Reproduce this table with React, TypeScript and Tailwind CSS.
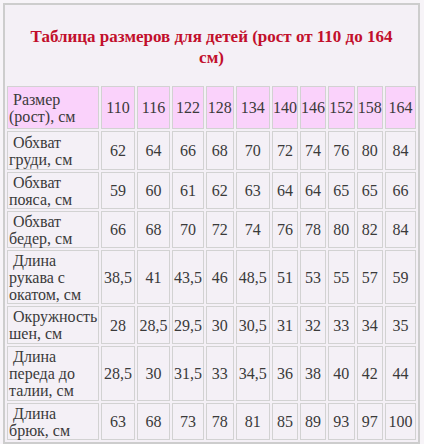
const widths = [90, 34, 34, 32, 28, 35, 26, 25, 27, 26, 32];

const sizes = ["110", "116", "122", "128", "134", "140", "146", "152", "158", "164"];

const rows: { label: string[]; h: string; values: string[] }[] = [
  { label: ["\u00a0Обхват", "груди, см"], h: "h-[39px]", values: ["62", "64", "66", "68", "70", "72", "74", "76", "80", "84"] },
  { label: ["\u00a0Обхват", "пояса, см"], h: "h-[37px]", values: ["59", "60", "61", "62", "63", "64", "64", "65", "65", "66"] },
  { label: ["\u00a0Обхват", "бедер, см"], h: "h-[37px]", values: ["66", "68", "70", "72", "74", "76", "78", "80", "82", "84"] },
  { label: ["\u00a0Длина", "рукава с", "окатом, см"], h: "h-[54px]", values: ["38,5", "41", "43,5", "46", "48,5", "51", "53", "55", "57", "59"] },
  { label: ["\u00a0Окружность", "шен, см"], h: "h-[38px]", values: ["28", "28,5", "29,5", "30", "30,5", "31", "32", "33", "34", "35"] },
  { label: ["\u00a0Длина", "переда до", "талии, см"], h: "h-[55px]", values: ["28,5", "30", "31,5", "33", "34,5", "36", "38", "40", "42", "44"] },
  { label: ["\u00a0Длина", "брюк, см"], h: "h-[37px]", values: ["63", "68", "73", "78", "81", "85", "89", "93", "97", "100"] },
];

export default function App() {
  return (
    <div className="w-[424px] h-[444px] bg-[#f7f4f8] pt-[3px] pl-[3px] overflow-hidden font-['Liberation_Serif',serif]">
      <div className="w-[417px] border-2 border-[#cdcdcd] bg-[#f4f0f6]">
        {/* title */}
        <div className="pt-[21px] pb-[16px] text-center text-[17px] leading-[21px] font-bold text-[#c20f2c]">
          Таблица размеров для детей (рост от 110 до 164
          <br />
          см)
        </div>

        <table className="table-fixed border-separate border-spacing-[2px] text-[16px] leading-[17px] text-[#3a3a3a] font-['Liberation_Serif',serif]">
          <tbody>
            <tr>
              <td
                className="h-[43px] border border-[#d2d2d2] bg-[#fad2fb] px-[1px] align-middle text-left"
                style={{ width: widths[0] }}
              >
                {"\u00a0Размер"}
                <br />
                (рост), см
              </td>
              {sizes.map((s, i) => (
                <td
                  key={s}
                  className="h-[43px] border border-[#d2d2d2] bg-[#fad2fb] p-0 text-center align-middle"
                  style={{ width: widths[i + 1] }}
                >
                  {s}
                </td>
              ))}
            </tr>
            {rows.map((r) => (
              <tr key={r.label.join(" ")}>
                <td className={`${r.h} border border-[#d2d2d2] bg-[#f4f0f6] px-[1px] text-left align-middle whitespace-nowrap`}>
                  {r.label.map((l, i) => (
                    <div key={i}>{l}</div>
                  ))}
                </td>
                {r.values.map((v, i) => (
                  <td
                    key={i}
                    className={`${r.h} border border-[#d2d2d2] bg-[#f4f0f6] p-0 text-center align-middle whitespace-nowrap`}
                  >
                    {v}
                  </td>
                ))}
              </tr>
            ))}
          </tbody>
        </table>
      </div>
    </div>
  );
}
